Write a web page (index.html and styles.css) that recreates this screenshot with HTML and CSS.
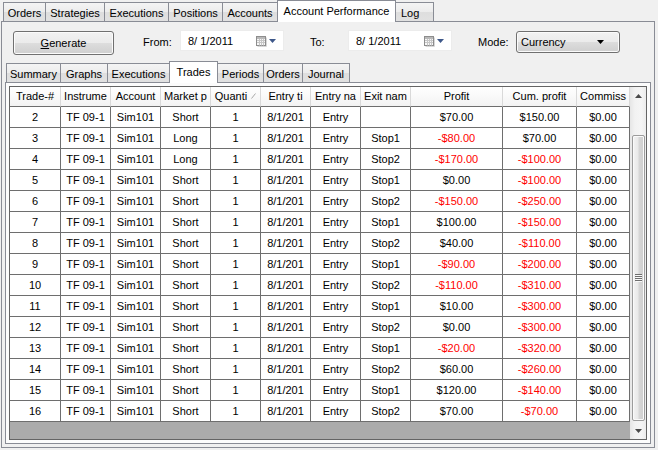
FILE: index.html
```html
<!DOCTYPE html>
<html>
<head>
<meta charset="utf-8">
<link rel="stylesheet" href="styles.css">
</head>
<body>
<div class="toptabs">
  <div class="tab">Orders</div>
  <div class="tab">Strategies</div>
  <div class="tab">Executions</div>
  <div class="tab">Positions</div>
  <div class="tab">Accounts</div>
  <div class="tab sel">Account Performance</div>
  <div class="tab">Log</div>
</div>
<div class="panel">
  <div class="toolbar">
    <div class="btn"><span class="u">G</span>enerate</div>
    <div class="lbl lbl-from">From:</div>
    <div class="date">
      <span class="dtext">8/&nbsp;1/2011</span>
      <svg class="cal" width="11" height="11" viewBox="0 0 11 11">
        <rect x="0.5" y="0.5" width="9" height="9" fill="#f7f7f7" stroke="#8d8d8d"/>
        <rect x="1" y="1" width="8" height="2" fill="#b9b9b9"/>
        <path d="M1 4.5H9M1 6.5H9M3.5 3V9.5M5.5 3V9.5M7.5 3V9.5" stroke="#c6c6c6" stroke-width="1"/>
        <path d="M10.5 1.5V10.5H1.5" stroke="#d8d8d8" fill="none"/>
      </svg>
      <svg class="dd" width="7" height="4" viewBox="0 0 7 4"><path d="M0 0H7L3.5 4Z" fill="#3d5789"/></svg>
    </div>
    <div class="lbl lbl-to">To:</div>
    <div class="date">
      <span class="dtext">8/&nbsp;1/2011</span>
      <svg class="cal" width="11" height="11" viewBox="0 0 11 11">
        <rect x="0.5" y="0.5" width="9" height="9" fill="#f7f7f7" stroke="#8d8d8d"/>
        <rect x="1" y="1" width="8" height="2" fill="#b9b9b9"/>
        <path d="M1 4.5H9M1 6.5H9M3.5 3V9.5M5.5 3V9.5M7.5 3V9.5" stroke="#c6c6c6" stroke-width="1"/>
        <path d="M10.5 1.5V10.5H1.5" stroke="#d8d8d8" fill="none"/>
      </svg>
      <svg class="dd" width="7" height="4" viewBox="0 0 7 4"><path d="M0 0H7L3.5 4Z" fill="#3d5789"/></svg>
    </div>
    <div class="lbl lbl-mode">Mode:</div>
    <div class="combo">
      <span>Currency</span>
      <svg class="carrow" width="7" height="4" viewBox="0 0 7 4"><path d="M0 0H7L3.5 4Z" fill="#000"/></svg>
    </div>
  </div>
  <div class="subtabs">
    <div class="stab">Summary</div>
    <div class="stab">Graphs</div>
    <div class="stab">Executions</div>
    <div class="stab sel">Trades</div>
    <div class="stab">Periods</div>
    <div class="stab">Orders</div>
    <div class="stab">Journal</div>
  </div>
  <div class="subpanel">
    <div class="grid">
      <div class="gbody">
        <div class="row head">
          <div class="c">Trade-#</div><div class="c">Instrume</div><div class="c">Account</div><div class="c">Market p</div><div class="c">Quanti <svg class="sort" width="5" height="6" viewBox="0 0 5 6"><path d="M0.5 5.5L4.5 0.5" stroke="#a8a8a8" stroke-width="1"/></svg></div><div class="c">Entry ti</div><div class="c">Entry na</div><div class="c">Exit nam</div><div class="c">Profit</div><div class="c">Cum. profit</div><div class="c">Commiss</div>
        </div>
        <div class="row"><div class="c">2</div><div class="c">TF 09-1</div><div class="c">Sim101</div><div class="c">Short</div><div class="c">1</div><div class="c">8/1/201</div><div class="c">Entry</div><div class="c"></div><div class="c">$70.00</div><div class="c">$150.00</div><div class="c">$0.00</div></div>
        <div class="row"><div class="c">3</div><div class="c">TF 09-1</div><div class="c">Sim101</div><div class="c">Long</div><div class="c">1</div><div class="c">8/1/201</div><div class="c">Entry</div><div class="c">Stop1</div><div class="c neg">-$80.00</div><div class="c">$70.00</div><div class="c">$0.00</div></div>
        <div class="row"><div class="c">4</div><div class="c">TF 09-1</div><div class="c">Sim101</div><div class="c">Long</div><div class="c">1</div><div class="c">8/1/201</div><div class="c">Entry</div><div class="c">Stop2</div><div class="c neg">-$170.00</div><div class="c neg">-$100.00</div><div class="c">$0.00</div></div>
        <div class="row"><div class="c">5</div><div class="c">TF 09-1</div><div class="c">Sim101</div><div class="c">Short</div><div class="c">1</div><div class="c">8/1/201</div><div class="c">Entry</div><div class="c">Stop1</div><div class="c">$0.00</div><div class="c neg">-$100.00</div><div class="c">$0.00</div></div>
        <div class="row"><div class="c">6</div><div class="c">TF 09-1</div><div class="c">Sim101</div><div class="c">Short</div><div class="c">1</div><div class="c">8/1/201</div><div class="c">Entry</div><div class="c">Stop2</div><div class="c neg">-$150.00</div><div class="c neg">-$250.00</div><div class="c">$0.00</div></div>
        <div class="row"><div class="c">7</div><div class="c">TF 09-1</div><div class="c">Sim101</div><div class="c">Short</div><div class="c">1</div><div class="c">8/1/201</div><div class="c">Entry</div><div class="c">Stop1</div><div class="c">$100.00</div><div class="c neg">-$150.00</div><div class="c">$0.00</div></div>
        <div class="row"><div class="c">8</div><div class="c">TF 09-1</div><div class="c">Sim101</div><div class="c">Short</div><div class="c">1</div><div class="c">8/1/201</div><div class="c">Entry</div><div class="c">Stop2</div><div class="c">$40.00</div><div class="c neg">-$110.00</div><div class="c">$0.00</div></div>
        <div class="row"><div class="c">9</div><div class="c">TF 09-1</div><div class="c">Sim101</div><div class="c">Short</div><div class="c">1</div><div class="c">8/1/201</div><div class="c">Entry</div><div class="c">Stop1</div><div class="c neg">-$90.00</div><div class="c neg">-$200.00</div><div class="c">$0.00</div></div>
        <div class="row"><div class="c">10</div><div class="c">TF 09-1</div><div class="c">Sim101</div><div class="c">Short</div><div class="c">1</div><div class="c">8/1/201</div><div class="c">Entry</div><div class="c">Stop2</div><div class="c neg">-$110.00</div><div class="c neg">-$310.00</div><div class="c">$0.00</div></div>
        <div class="row"><div class="c">11</div><div class="c">TF 09-1</div><div class="c">Sim101</div><div class="c">Short</div><div class="c">1</div><div class="c">8/1/201</div><div class="c">Entry</div><div class="c">Stop1</div><div class="c">$10.00</div><div class="c neg">-$300.00</div><div class="c">$0.00</div></div>
        <div class="row"><div class="c">12</div><div class="c">TF 09-1</div><div class="c">Sim101</div><div class="c">Short</div><div class="c">1</div><div class="c">8/1/201</div><div class="c">Entry</div><div class="c">Stop2</div><div class="c">$0.00</div><div class="c neg">-$300.00</div><div class="c">$0.00</div></div>
        <div class="row"><div class="c">13</div><div class="c">TF 09-1</div><div class="c">Sim101</div><div class="c">Short</div><div class="c">1</div><div class="c">8/1/201</div><div class="c">Entry</div><div class="c">Stop1</div><div class="c neg">-$20.00</div><div class="c neg">-$320.00</div><div class="c">$0.00</div></div>
        <div class="row"><div class="c">14</div><div class="c">TF 09-1</div><div class="c">Sim101</div><div class="c">Short</div><div class="c">1</div><div class="c">8/1/201</div><div class="c">Entry</div><div class="c">Stop2</div><div class="c">$60.00</div><div class="c neg">-$260.00</div><div class="c">$0.00</div></div>
        <div class="row"><div class="c">15</div><div class="c">TF 09-1</div><div class="c">Sim101</div><div class="c">Short</div><div class="c">1</div><div class="c">8/1/201</div><div class="c">Entry</div><div class="c">Stop1</div><div class="c">$120.00</div><div class="c neg">-$140.00</div><div class="c">$0.00</div></div>
        <div class="row"><div class="c">16</div><div class="c">TF 09-1</div><div class="c">Sim101</div><div class="c">Short</div><div class="c">1</div><div class="c">8/1/201</div><div class="c">Entry</div><div class="c">Stop2</div><div class="c">$70.00</div><div class="c neg">-$70.00</div><div class="c">$0.00</div></div>
        <div class="filler"></div>
      </div>
      <div class="vscroll">
        <div class="sbtn"><svg width="7" height="4" viewBox="0 0 7 4"><path d="M0 4H7L3.5 0Z" fill="#4a4a4a"/></svg></div>
        <div class="track-top"></div>
        <div class="thumb">
          <svg class="grip" width="7" height="8" viewBox="0 0 7 8">
            <path d="M0 0.5H7M0 2.5H7M0 4.5H7M0 6.5H7" stroke="#6e6e6e"/>
            <path d="M1 1.5H7M1 3.5H7M1 5.5H7M1 7.5H7" stroke="#ffffff" stroke-opacity="0.8"/>
          </svg>
        </div>
        <div class="track-bot"></div>
        <div class="sbtn"><svg width="7" height="4" viewBox="0 0 7 4"><path d="M0 0H7L3.5 4Z" fill="#4a4a4a"/></svg></div>
      </div>
    </div>
  </div>
</div>
</body>
</html>
```
FILE: styles.css
```css
html, body {
  margin: 0;
  padding: 0;
}
body {
  width: 658px;
  height: 450px;
  overflow: hidden;
  background: #f0f0f0;
  font-family: "Liberation Sans", Arial, sans-serif;
  font-size: 11px;
  color: #000;
}

/* top tab strip */
.toptabs {
  display: flex;
  align-items: flex-end;
  height: 21px;
  padding-left: 3px;
  position: relative;
  z-index: 2;
}
.tab {
  box-sizing: border-box;
  height: 19px;
  border: 1px solid #898c95;
  border-bottom: none;
  margin-right: -1px;
  background: linear-gradient(#f4f4f4 0%, #ececec 50%, #dedede 51%, #e1e1e1 100%);
  display: flex;
  align-items: center;
  justify-content: center;
  white-space: nowrap;
  padding-top: 1px;
}
.tab:nth-child(1) { width: 43px; }
.tab:nth-child(2) { width: 60px; }
.tab:nth-child(3) { width: 65px; }
.tab:nth-child(4) { width: 55px; }
.tab:nth-child(5) { width: 56px; }
.tab:nth-child(6) { width: 119px; }
.tab:nth-child(7) { width: 39px; justify-content: flex-start; padding-left: 5px; }
.tab.sel {
  height: 22px;
  margin-bottom: -1px;
  background: #fff;
  position: relative;
  z-index: 3;
  padding-top: 0;
  padding-bottom: 2px;
}

/* outer panel */
.panel {
  box-sizing: border-box;
  width: 654px;
  height: 427px;
  margin-left: 1px;
  border: 1px solid #898c95;
  background: #f0f0f0;
  padding: 8px 3px 3px 3px;
  position: relative;
  z-index: 1;
}

.toolbar {
  display: flex;
  align-items: flex-start;
  height: 25px;
  margin-bottom: 6px;
}
.btn {
  box-sizing: border-box;
  margin-left: 8px;
  margin-top: 1px;
  width: 101px;
  height: 24px;
  border: 1px solid #707070;
  border-radius: 3px;
  background: linear-gradient(#f2f2f2 0%, #ebebeb 50%, #dddddd 51%, #cfcfcf 100%);
  box-shadow: inset 0 0 0 1px #fbfbfb;
  display: flex;
  align-items: center;
  justify-content: center;
}
.u { text-decoration: underline; }
.lbl {
  line-height: 24px;
  white-space: nowrap;
}
.lbl-from { margin-left: 29px; width: 37px; }
.lbl-to { margin-left: 26px; width: 38px; }
.lbl-mode { margin-left: 26px; width: 38px; }

.date {
  box-sizing: border-box;
  width: 104px;
  height: 21px;
  background: #fff;
  border: 1px solid #ececec;
  display: flex;
  align-items: center;
  padding: 0 7px 0 7px;
}
.dtext { white-space: nowrap; }
.cal { margin-left: auto; margin-top: 1px; }
.dd { margin-left: 2px; margin-top: 0; }

.combo {
  box-sizing: border-box;
  margin-top: 1px;
  width: 104px;
  height: 22px;
  border: 1px solid #707070;
  border-radius: 3px;
  background: linear-gradient(#f2f2f2 0%, #ebebeb 50%, #dddddd 51%, #cfcfcf 100%);
  box-shadow: inset 0 0 0 1px #fbfbfb;
  display: flex;
  align-items: center;
  padding: 0 15px 0 4px;
}
.carrow { margin-left: auto; }

/* sub tabs */
.subtabs {
  display: flex;
  align-items: flex-end;
  height: 21px;
  padding-left: 1px;
  position: relative;
  z-index: 2;
}
.stab {
  box-sizing: border-box;
  height: 19px;
  border: 1px solid #898c95;
  border-bottom: none;
  margin-right: -1px;
  background: linear-gradient(#f4f4f4 0%, #ececec 50%, #dedede 51%, #e1e1e1 100%);
  display: flex;
  align-items: center;
  justify-content: center;
  white-space: nowrap;
  padding-top: 1px;
}
.stab:nth-child(1) { width: 55px; }
.stab:nth-child(2) { width: 48px; }
.stab:nth-child(3) { width: 63px; }
.stab:nth-child(4) { width: 49px; }
.stab:nth-child(5) { width: 47px; }
.stab:nth-child(6) { width: 40px; }
.stab:nth-child(7) { width: 48px; }
.stab.sel {
  height: 22px;
  margin-bottom: -1px;
  background: #fff;
  position: relative;
  z-index: 3;
  padding-top: 0;
  padding-bottom: 2px;
}

.subpanel {
  box-sizing: border-box;
  height: 362px;
  border: 1px solid #898c95;
  background: #fcfcfc;
  padding: 3px;
}

/* data grid */
.grid {
  box-sizing: border-box;
  height: 354px;
  border: 1px solid #646464;
  display: flex;
  background: #ababab;
}
.gbody {
  display: flex;
  flex-direction: column;
  width: 620px;
}
.row {
  display: flex;
  height: 21px;
}
.c {
  box-sizing: border-box;
  height: 21px;
  line-height: 20px;
  border-right: 1px solid #6e6e6e;
  border-bottom: 1px solid #6e6e6e;
  background: #fff;
  text-align: center;
  white-space: nowrap;
  overflow: hidden;
}
.c:nth-child(1) { width: 51px; }
.c:nth-child(2),
.c:nth-child(3),
.c:nth-child(4),
.c:nth-child(5),
.c:nth-child(6),
.c:nth-child(7),
.c:nth-child(8) { width: 50px; }
.c:nth-child(9) { width: 92px; }
.c:nth-child(10) { width: 74px; }
.c:nth-child(11) { width: 53px; }
.neg { color: #ff0000; }

.head { height: 20px; }
.head .c {
  height: 20px;
  line-height: 19px;
  background: linear-gradient(#ffffff, #f3f3f3);
  border-right: 1px solid #d9d9d9;
  border-bottom: 1px solid #6e6e6e;
}
.sort { vertical-align: 1px; margin-left: 1px; }

.filler {
  flex: 1;
  background: #ababab;
}

/* vertical scrollbar */
.vscroll {
  width: 16px;
  display: flex;
  flex-direction: column;
  background: linear-gradient(to right, #e6e6e6, #f2f2f2 30%, #f5f5f5 70%, #ececec);
}
.sbtn {
  height: 17px;
  display: flex;
  align-items: center;
  justify-content: center;
}
.track-top { height: 31px; }
.track-bot { flex: 1; }
.thumb {
  box-sizing: border-box;
  height: 286px;
  margin: 0 0 0 2px;
  width: 13px;
  border: 1px solid #9c9c9c;
  border-radius: 2px;
  background: linear-gradient(to right, #f3f3f3 0%, #e9e9e9 45%, #d6d6d6 55%, #cfcfcf 100%);
  box-shadow: inset 0 0 0 1px #fafafa;
  display: flex;
  align-items: center;
  justify-content: center;
}
```
